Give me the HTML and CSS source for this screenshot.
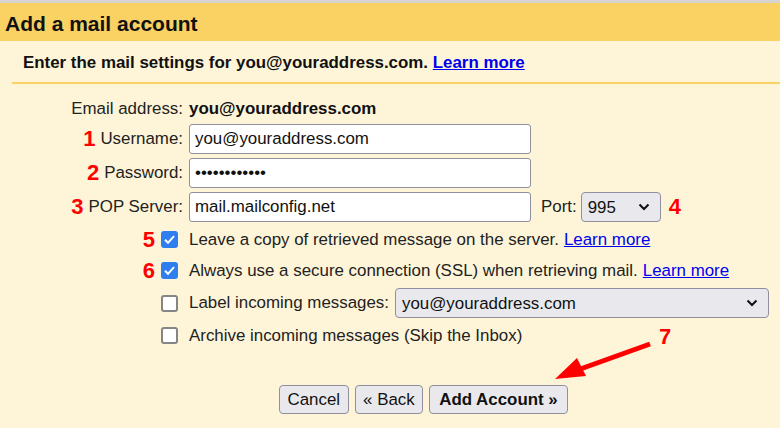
FILE: index.html
```html
<!DOCTYPE html>
<html>
<head>
<meta charset="utf-8">
<link rel="stylesheet" href="styles.css">
</head>
<body>
<div class="page">
  <div class="topline"></div>
  <h1 class="title">Add a mail account</h1>
  <div class="intro">Enter the mail settings for you@youraddress.com. <a href="#">Learn more</a></div>
  <div class="rule"></div>

  <div class="form">
    <div class="lbl first">Email address:</div>
    <div class="val first"><b>you@youraddress.com</b></div>

    <div class="lbl"><span class="num">1</span> Username:</div>
    <div class="val"><input class="text" type="text" value="you@youraddress.com"></div>

    <div class="lbl"><span class="num">2</span> Password:</div>
    <div class="val"><input class="text" type="password" value="abcdefghijkl"></div>

    <div class="lbl"><span class="num">3</span> POP Server:</div>
    <div class="val">
      <input class="text" type="text" value="mail.mailconfig.net">
      <span class="port">Port:</span>
      <select class="sel port-sel"><option>995</option></select>
      <span class="num num4">4</span>
    </div>

    <div class="lbl cb"><span class="num">5</span><input type="checkbox" class="chk" checked></div>
    <div class="val">Leave a copy of retrieved message on the server. <a href="#">Learn more</a></div>

    <div class="lbl cb"><span class="num">6</span><input type="checkbox" class="chk" checked></div>
    <div class="val">Always use a secure connection (SSL) when retrieving mail. <a href="#">Learn more</a></div>

    <div class="lbl cb"><input type="checkbox" class="chk"></div>
    <div class="val">Label incoming messages:<select class="sel label-sel"><option>you@youraddress.com</option></select></div>

    <div class="lbl cb"><input type="checkbox" class="chk"></div>
    <div class="val">Archive incoming messages (Skip the Inbox)</div>
  </div>

  <div class="buttons">
    <button class="btn">Cancel</button>
    <button class="btn">« Back</button>
    <button class="btn primary">Add Account »</button>
  </div>

  <div class="callout">
    <span class="num num7">7</span>
    <svg class="arrow" width="110" height="50" viewBox="0 0 110 50">
      <line x1="100" y1="6" x2="22" y2="34" stroke="#ff0000" stroke-width="5" stroke-linecap="butt"/>
      <polygon points="5,41 27,20 36,38" fill="#ff0000"/>
    </svg>
  </div>
</div>
</body>
</html>
```

FILE: styles.css
```css
html, body {
  margin: 0;
  padding: 0;
}
body {
  background: #fef5d9;
  font-family: "Liberation Sans", Arial, sans-serif;
  font-size: 16.9px;
  color: #222;
  width: 780px;
  height: 428px;
  overflow: hidden;
}
.page {
  position: relative;
}
.topline {
  height: 3px;
  background: #d6d4d0;
}
.title {
  margin: 0;
  height: 38px;
  line-height: 42px;
  background: #fad163;
  font-size: 21px;
  font-weight: bold;
  color: #111;
  padding-left: 5px;
}
.intro {
  height: 41px;
  line-height: 43px;
  padding-left: 23px;
  font-weight: bold;
  font-size: 16.9px;
  color: #111;
}
.intro a, .val a {
  color: #0000ee;
}
.rule {
  margin-left: 12px;
  height: 2px;
  background: #fad163;
}
.form {
  display: grid;
  grid-template-columns: 183px auto;
  grid-template-rows: 26px 30px 30px 30px 27px 27px 30px 27px;
  column-gap: 6px;
  row-gap: 4px;
  margin-top: 10px;
}
.lbl {
  display: flex;
  align-items: center;
  justify-content: flex-end;
  white-space: nowrap;
}
.val {
  display: flex;
  align-items: center;
  white-space: nowrap;
}
.first {
  padding-top: 3px;
}
.val b {
  color: #111;
}
.val a {
  margin-left: 5px;
}
.num {
  color: #ff0000;
  font-weight: bold;
  font-size: 22px;
  margin-right: 5px;
}
.text {
  box-sizing: border-box;
  width: 342px;
  height: 30px;
  border: 1px solid #8f8f9d;
  border-radius: 3px;
  background: #fff;
  font-family: "Liberation Sans", Arial, sans-serif;
  font-size: 16.9px;
  padding: 0 5px;
  margin: 0;
  color: #111;
}
.port {
  margin-left: 10px;
  margin-right: 4px;
}
.sel {
  -webkit-appearance: none;
  appearance: none;
  box-sizing: border-box;
  height: 30px;
  font-family: "Liberation Sans", Arial, sans-serif;
  font-size: 16.9px;
  color: #111;
  background-color: #e9e9ed;
  background-image: url("data:image/svg+xml;utf8,<svg xmlns='http://www.w3.org/2000/svg' width='12' height='8' viewBox='0 0 12 8'><path d='M1.5 1.5 L6 6 L10.5 1.5' fill='none' stroke='%23111' stroke-width='2'/></svg>");
  background-repeat: no-repeat;
  background-position: right 10px center;
  border: 1px solid #8f8f9d;
  border-radius: 4px;
  margin: 0;
}
.port-sel {
  width: 80px;
  padding-left: 6px;
}
.num4 {
  margin-left: 8px;
}
.label-sel {
  width: 374px;
  margin-left: 6px;
  padding-left: 6px;
}
.cb {
  padding-right: 5px;
}
.cb .num {
  margin-right: 6px;
}
.chk {
  -webkit-appearance: none;
  appearance: none;
  box-sizing: border-box;
  width: 17px;
  height: 17px;
  margin: 0;
  border: 2px solid #858585;
  border-radius: 3px;
  background: #fff;
}
.chk:checked {
  border: none;
  background-color: #2f7ef0;
  background-image: url("data:image/svg+xml;utf8,<svg xmlns='http://www.w3.org/2000/svg' width='17' height='17' viewBox='0 0 17 17'><path d='M4 8.8 L7 11.8 L13 5.2' fill='none' stroke='white' stroke-width='2'/></svg>");
}
.buttons {
  display: flex;
  gap: 6px;
  padding-left: 279px;
  margin-top: 36px;
}
.btn {
  box-sizing: border-box;
  height: 29px;
  padding: 0 7.5px;
  font-family: "Liberation Sans", Arial, sans-serif;
  font-size: 16.9px;
  color: #111;
  background: #e9e9ed;
  border: 1px solid #8f8f9d;
  border-radius: 4px;
  margin: 0;
}
.btn.primary {
  font-weight: bold;
  padding: 0 9px;
}
.callout {
  position: absolute;
  left: 545px;
  top: 325px;
  width: 140px;
  height: 60px;
}
.num7 {
  position: absolute;
  left: 114px;
  top: 0;
  margin: 0;
  line-height: 24px;
}
.arrow {
  position: absolute;
  left: 5px;
  top: 13px;
}
```
